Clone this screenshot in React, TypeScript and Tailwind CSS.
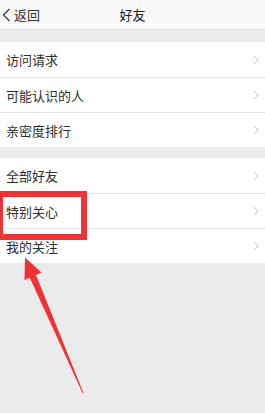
import React from "react";

const font = { fontFamily: '"Noto Sans CJK SC", "Noto Sans", sans-serif' };

function Chevron() {
  return (
    <svg width="6" height="10" viewBox="0 0 6 10" className="shrink-0">
      <path d="M1 1 L5 5 L1 9" fill="none" stroke="#c4c4c4" strokeWidth="1" />
    </svg>
  );
}

function Row({ label, first }: { label: string; first?: boolean }) {
  return (
    <div
      className={`h-[35px] flex items-center justify-between pl-[6px] pr-[6px] bg-white ${
        first ? "" : "border-t border-[#e6e6e6]"
      }`}
    >
      <span className="text-[13px] leading-none text-[#2e2e2e]">{label}</span>
      <Chevron />
    </div>
  );
}

export default function App() {
  return (
    <div
      className="relative w-[265px] h-[413px] bg-[#ebebeb] overflow-hidden"
      style={font}
    >
      <div className="h-[30px] bg-[#f8f8f8] border-b border-[#dedede] relative flex items-center">
        <div className="flex items-center pl-[2px] gap-[3px]">
          <svg width="9" height="14" viewBox="0 0 9 14">
            <path d="M7.5 1 L1.5 7 L7.5 13" fill="none" stroke="#333" strokeWidth="1.2" />
          </svg>
          <span className="text-[13px] leading-none text-[#333]">返回</span>
        </div>
        <span className="absolute left-0 right-0 text-center text-[13px] leading-none text-[#222]">
          好友
        </span>
      </div>
      <div className="mt-[12px]">
        <Row label="访问请求" first />
        <Row label="可能认识的人" />
        <Row label="亲密度排行" />
      </div>
      <div className="mt-[11px]">
        <Row label="全部好友" first />
        <Row label="特别关心" />
        <Row label="我的关注" />
      </div>

      <div className="absolute left-[-3px] top-[191px] w-[90px] h-[49px] border-[6px] border-[#ee3236]" />

      <svg
        className="absolute left-0 top-0"
        width="265"
        height="413"
        viewBox="0 0 265 413"
      >
        <polygon
          points="25,257.5 41.5,272.5 36,275 83.5,393 82.5,393 29.8,277.8 24.5,280"
          fill="#ee3236"
        />
      </svg>
    </div>
  );
}
